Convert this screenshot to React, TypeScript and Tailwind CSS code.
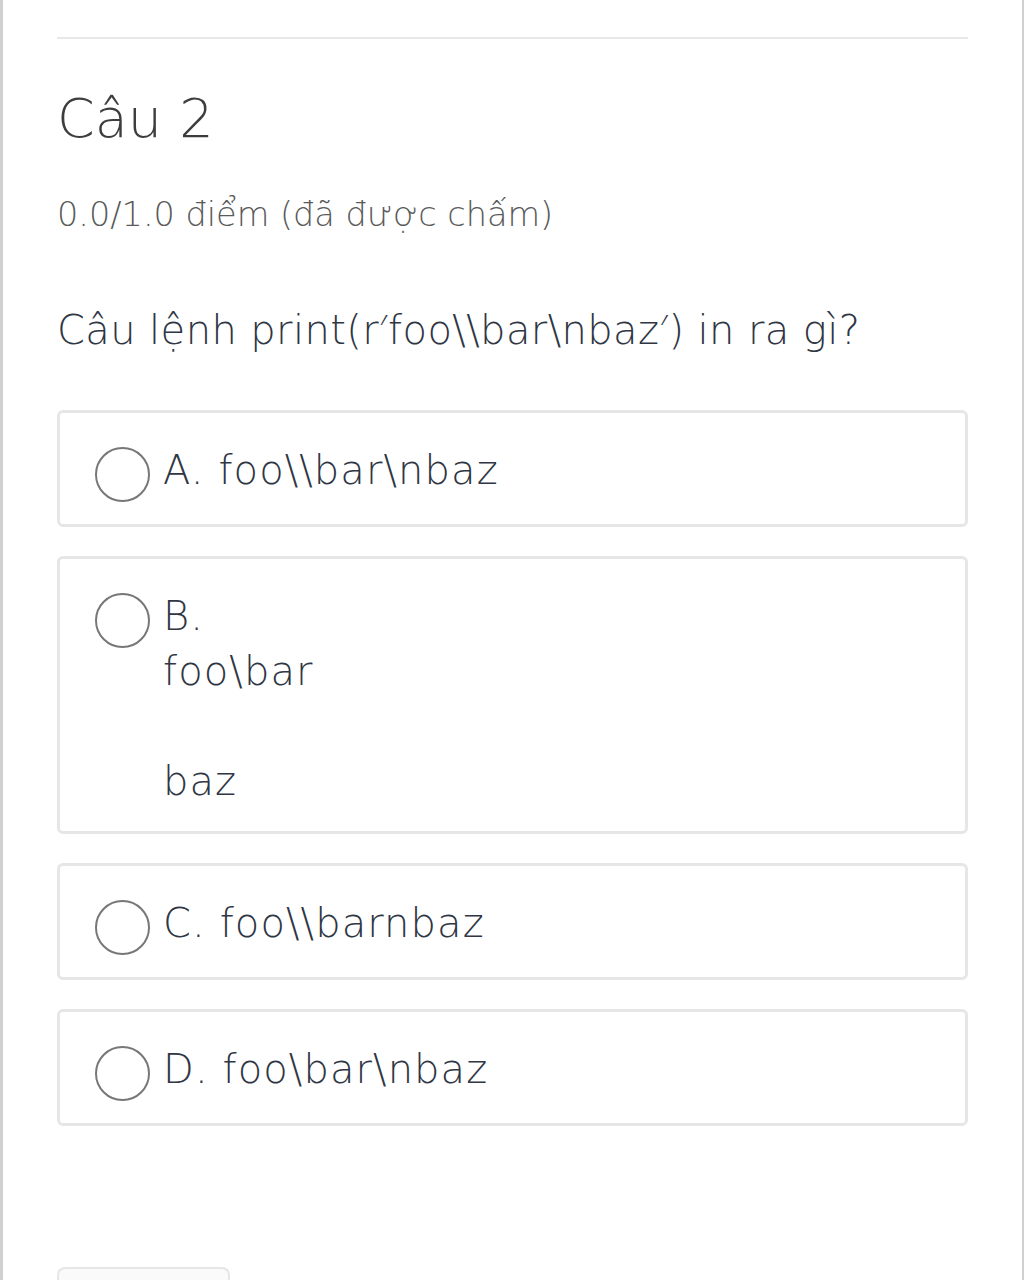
const options = [
  { key: 'A', lines: ['A. foo\\\\bar\\nbaz'] },
  { key: 'B', lines: ['B.', 'foo\\bar', '', 'baz'] },
  { key: 'C', lines: ['C. foo\\\\barnbaz'] },
  { key: 'D', lines: ['D. foo\\bar\\nbaz'] },
];

const Option = ({ lines }: { lines: string[] }) => (
  <label className="flex items-start gap-[13px] rounded-[6px] border-[3px] border-[#e6e6e6] pl-[35px] pr-[35px] pt-[30px] pb-[22px]">
    <span className="mt-[4px] h-[55px] w-[55px] shrink-0 rounded-full border-2 border-[#777] bg-white" />
    <div className="flex flex-col text-[40px] font-extralight leading-[55px] tracking-[1.1px] text-[#2f3644]">
      {lines.map((line, i) => (
        <span key={i} className="whitespace-pre">
          {line === '' ? '\u00a0' : line}
        </span>
      ))}
    </div>
  </label>
);

export default function App() {
  return (
    <div
      className="min-h-[1280px] w-full border-l-[3px] border-r-[2px] border-[#d0d0d0] bg-white px-[54px] pt-[37px]"
      style={{ fontFamily: '"DejaVu Sans", "Noto Sans", sans-serif' }}
    >
      <div className="h-[2px] bg-[#e8e8e8]" />
      <h2 className="mt-[48px] text-[54px] font-extralight leading-[64px] text-[#3d3d3d]">Câu 2</h2>
      <p className="mt-[40px] text-[33.5px] font-extralight leading-[48px] text-[#5a5a5a]">0.0/1.0 điểm (đã được chấm)</p>
      <p className="mt-[64px] text-[40px] font-extralight leading-[54px] tracking-[0.4px] text-[#2f3644]">
        Câu lệnh print(r′foo\\bar\nbaz′) in ra gì?
      </p>
      <div className="mt-[53px] flex flex-col gap-[29px]">
        {options.map((o) => (
          <Option key={o.key} lines={o.lines} />
        ))}
      </div>
      <div className="mt-[141px] h-[40px] w-[173px] rounded-t-[8px] border-[2px] border-b-0 border-[#e6e6e6] bg-[#fafafa]" />
    </div>
  );
}
